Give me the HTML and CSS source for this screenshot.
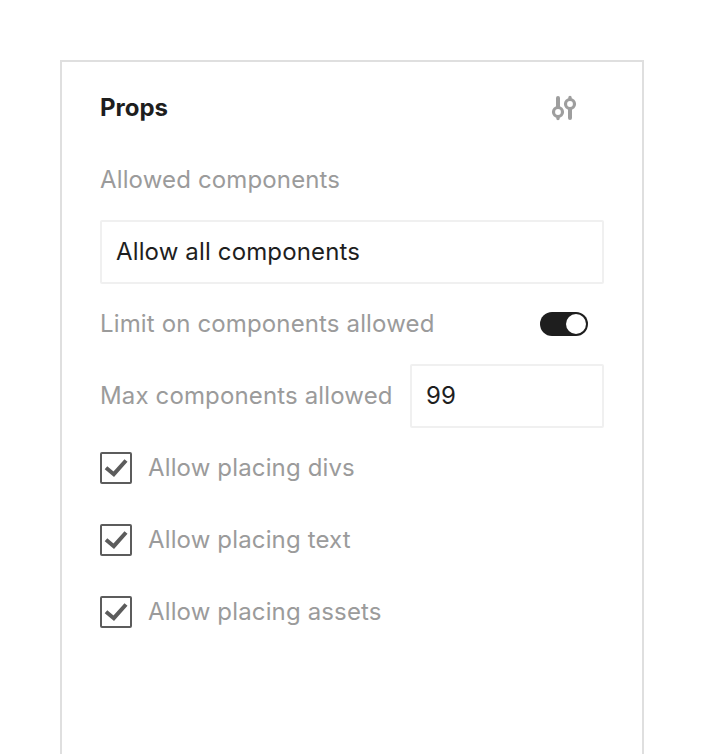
FILE: index.html
```html
<!DOCTYPE html>
<html lang="en">
<head>
<meta charset="utf-8">
<title>Props</title>
<link rel="stylesheet" href="styles.css">
</head>
<body>
<main class="panel">
  <header class="row header">
    <h1 class="title">Props</h1>
    <svg class="sliders" width="26" height="26" viewBox="0 0 26 26"><path class="stem" d="M7 3v9M19 14v9"/><path class="tip" d="M7 22v1.500M19 2.500V4"/><circle cx="7" cy="17" r="4.500"/><circle cx="19" cy="9" r="4.500"/></svg>
  </header>
  <div class="row label">Allowed components</div>
  <div class="row"><div class="field wide">Allow all components</div></div>
  <div class="row label split"><span>Limit on components allowed</span><span class="toggle"></span></div>
  <div class="row label split"><span>Max components allowed</span><div class="field number">99</div></div>
  <div class="row label check"><span class="box"><svg width="28" height="28" viewBox="0 0 28 28"><path d="M4 13.800l7.800 6.400L24 6.500"/></svg></span><span>Allow placing divs</span></div>
  <div class="row label check"><span class="box"><svg width="28" height="28" viewBox="0 0 28 28"><path d="M4 13.800l7.800 6.400L24 6.500"/></svg></span><span>Allow placing text</span></div>
  <div class="row label check"><span class="box"><svg width="28" height="28" viewBox="0 0 28 28"><path d="M4 13.800l7.800 6.400L24 6.500"/></svg></span><span>Allow placing assets</span></div>
</main>
</body>
</html>
```
FILE: styles.css
```css
* { box-sizing: border-box; }
body {
  margin: 0;
  padding: 60px 60px 0;
  background: #fff;
  color: #1e1e1e;
  font: 400 24px/32px Inter, "Liberation Sans", sans-serif;
  letter-spacing: 0.14px;
}
.panel {
  width: 584px;
  height: 694px;
  padding: 10px 38px;
  border: 2px solid #dfdfdf;
  border-bottom: 0;
}
.row { display: flex; align-items: center; height: 72px; white-space: nowrap; }
.header { justify-content: space-between; padding-right: 27px; }
.title { margin: 0; font-size: 24px; font-weight: 700; letter-spacing: 0; }
.sliders { fill: none; stroke: #9e9e9e; stroke-width: 3.2; stroke-linecap: round; }
.stem { stroke-width: 4; }
.tip { stroke-width: 3.4; }
.label { color: #9b9b9b; }
.field {
  display: flex;
  align-items: center;
  height: 64px;
  padding: 0 14px;
  border: 2px solid #f0f0f0;
  border-radius: 2px;
  color: #1e1e1e;
}
.wide { width: 504px; }
.number { width: 194px; }
.split { justify-content: space-between; }
.toggle {
  display: flex;
  justify-content: flex-end;
  width: 48px;
  height: 24px;
  margin-right: 16px;
  padding: 2px;
  border-radius: 12px;
  background: #1e1e1e;
}
.toggle::after { content: ""; width: 20px; height: 20px; border-radius: 50%; background: #fff; }
.check { gap: 16px; }
.box { width: 32px; height: 32px; border: 2px solid #5c5c5c; border-radius: 2px; }
.box svg { display: block; fill: none; stroke: #5c5c5c; stroke-width: 4; }
```
